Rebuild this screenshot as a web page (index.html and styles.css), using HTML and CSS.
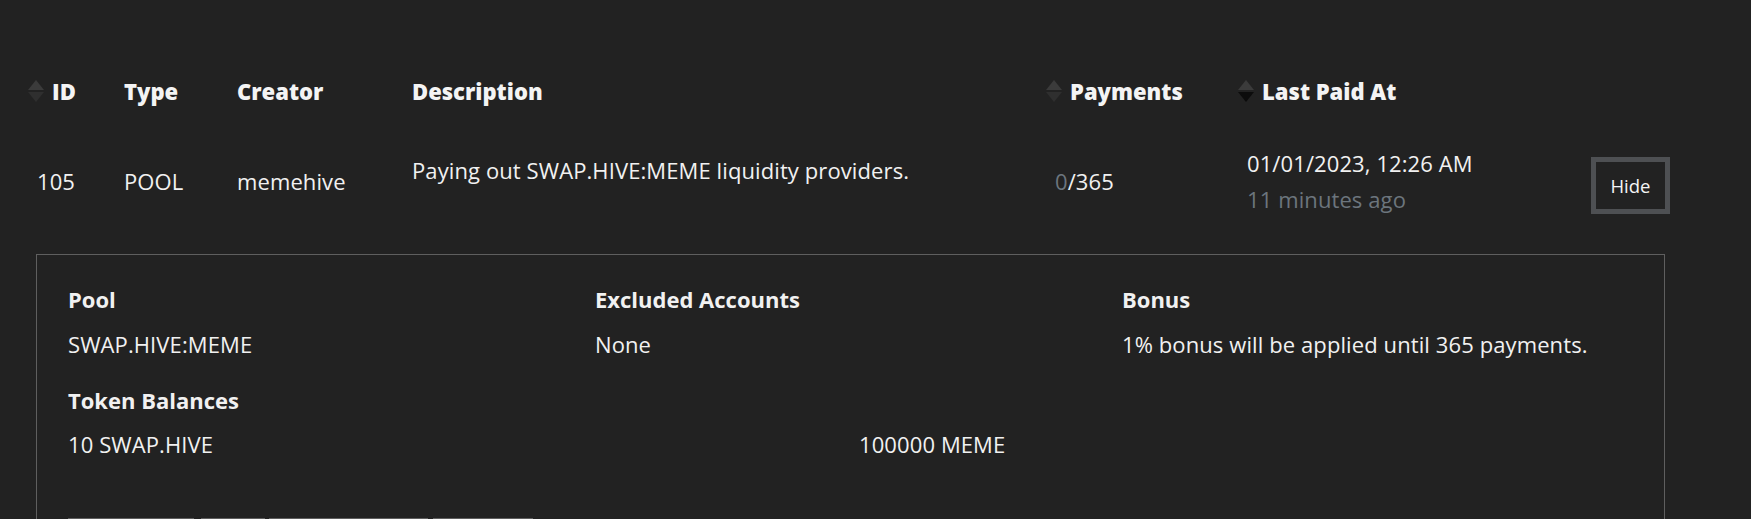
FILE: index.html
```html
<!DOCTYPE html>
<html lang="en">
<head>
<meta charset="utf-8">
<title>Distribution</title>
<link rel="stylesheet" href="styles.css">
</head>
<body>
<div class="page">
  <div class="thead">
    <div class="th sortable">
      <svg class="sort" viewBox="0 0 16 22"><path class="up" d="M8 0 L16 10 H0 Z"/><path class="down" d="M0 12 H16 L8 22 Z"/></svg>
      <span>ID</span>
    </div>
    <div class="th">Type</div>
    <div class="th">Creator</div>
    <div class="th">Description</div>
    <div class="th sortable">
      <svg class="sort" viewBox="0 0 16 22"><path class="up" d="M8 0 L16 10 H0 Z"/><path class="down" d="M0 12 H16 L8 22 Z"/></svg>
      <span>Payments</span>
    </div>
    <div class="th sortable">
      <svg class="sort" viewBox="0 0 16 22"><path class="up" d="M8 0 L16 10 H0 Z"/><path class="down active" d="M0 12 H16 L8 22 Z"/></svg>
      <span>Last Paid At</span>
    </div>
    <div class="th"></div>
  </div>

  <div class="trow">
    <div class="td">105</div>
    <div class="td">POOL</div>
    <div class="td">memehive</div>
    <div class="td desc">Paying out SWAP.HIVE:MEME liquidity providers.</div>
    <div class="td"><span class="muted">0</span>/365</div>
    <div class="td date">
      <div>01/01/2023, 12:26 AM</div>
      <div class="muted">11 minutes ago</div>
    </div>
    <div class="td"><button class="hide">Hide</button></div>
  </div>

  <div class="details">
    <div class="grid3">
      <div>
        <div class="label">Pool</div>
        <div class="value">SWAP.HIVE:MEME</div>
      </div>
      <div>
        <div class="label">Excluded Accounts</div>
        <div class="value">None</div>
      </div>
      <div>
        <div class="label">Bonus</div>
        <div class="value">1% bonus will be applied until 365 payments.</div>
      </div>
    </div>
    <div class="balances">
      <div class="label">Token Balances</div>
      <div class="grid2">
        <div>10 SWAP.HIVE</div>
        <div>100000 MEME</div>
      </div>
    </div>
    <div class="buttons">
      <div class="btn b1"></div>
      <div class="btn b2"></div>
      <div class="btn b3"></div>
      <div class="btn b4"></div>
    </div>
  </div>
</div>
</body>
</html>
```

FILE: styles.css
```css
* { box-sizing: border-box; }

html, body {
  margin: 0;
  background: #222222;
  color: #f1f1f1;
  font-family: "Open Sans", "Noto Sans", sans-serif;
  overflow: hidden;
}

.page {
  padding: 0 0 0 36px;
}

.thead,
.trow {
  display: grid;
  grid-template-columns: 87px 113px 175px 643px 192px 344px 79px;
  padding-left: 1px;
}

.thead {
  padding-top: 76px;
  font-size: 22px;
  font-weight: 800;
  line-height: 30px;
  color: #f4f4f4;
}

.th {
  display: flex;
  align-items: center;
}

.sort {
  width: 16px;
  height: 22px;
  margin-left: -9px;
  margin-right: 8px;
  flex: none;
}

.sort .up { fill: #3b3b3b; }
.sort .down { fill: #2f2f2f; }
.sort .down.active { fill: #0c0c0c; }

.trow {
  margin-top: 39px;
  align-items: center;
  font-size: 22px;
  letter-spacing: 0.1px;
}

.td {
  line-height: 30px;
  white-space: nowrap;
}

.desc {
  align-self: start;
  padding-top: 10px;
}

.date div {
  line-height: 36px;
}

.muted {
  color: #6c757d;
}

.hide {
  display: block;
  width: 79px;
  height: 57px;
  margin-top: 9px;
  border: 5px solid #4e5053;
  background: #222222;
  color: #f4f4f4;
  font-family: "Open Sans", "Noto Sans", sans-serif;
  font-size: 18.5px;
  letter-spacing: 0;
  padding: 0;
}

.details {
  margin-top: 37px;
  width: 1629px;
  border: 1px solid #5f5f5f;
  border-bottom: none;
  padding: 29px 15px 0 31px;
  font-size: 22px;
  letter-spacing: 0.1px;
}

.grid3 {
  display: grid;
  grid-template-columns: repeat(3, 527px);
}

.label {
  font-weight: 700;
  line-height: 30px;
  letter-spacing: 0;
}

.value {
  margin-top: 15px;
  line-height: 30px;
}

.balances {
  margin-top: 26px;
}

.grid2 {
  display: grid;
  grid-template-columns: 791px 791px;
  margin-top: 14px;
  line-height: 30px;
}

.buttons {
  display: flex;
  margin-top: 59px;
}

.btn {
  height: 40px;
  border: 1px solid #5f5f5f;
}

.b1 { width: 126px; margin-right: 7px; }
.b2 { width: 64px; margin-right: 4px; }
.b3 { width: 159px; margin-right: 5px; }
.b4 { width: 100px; }
```
